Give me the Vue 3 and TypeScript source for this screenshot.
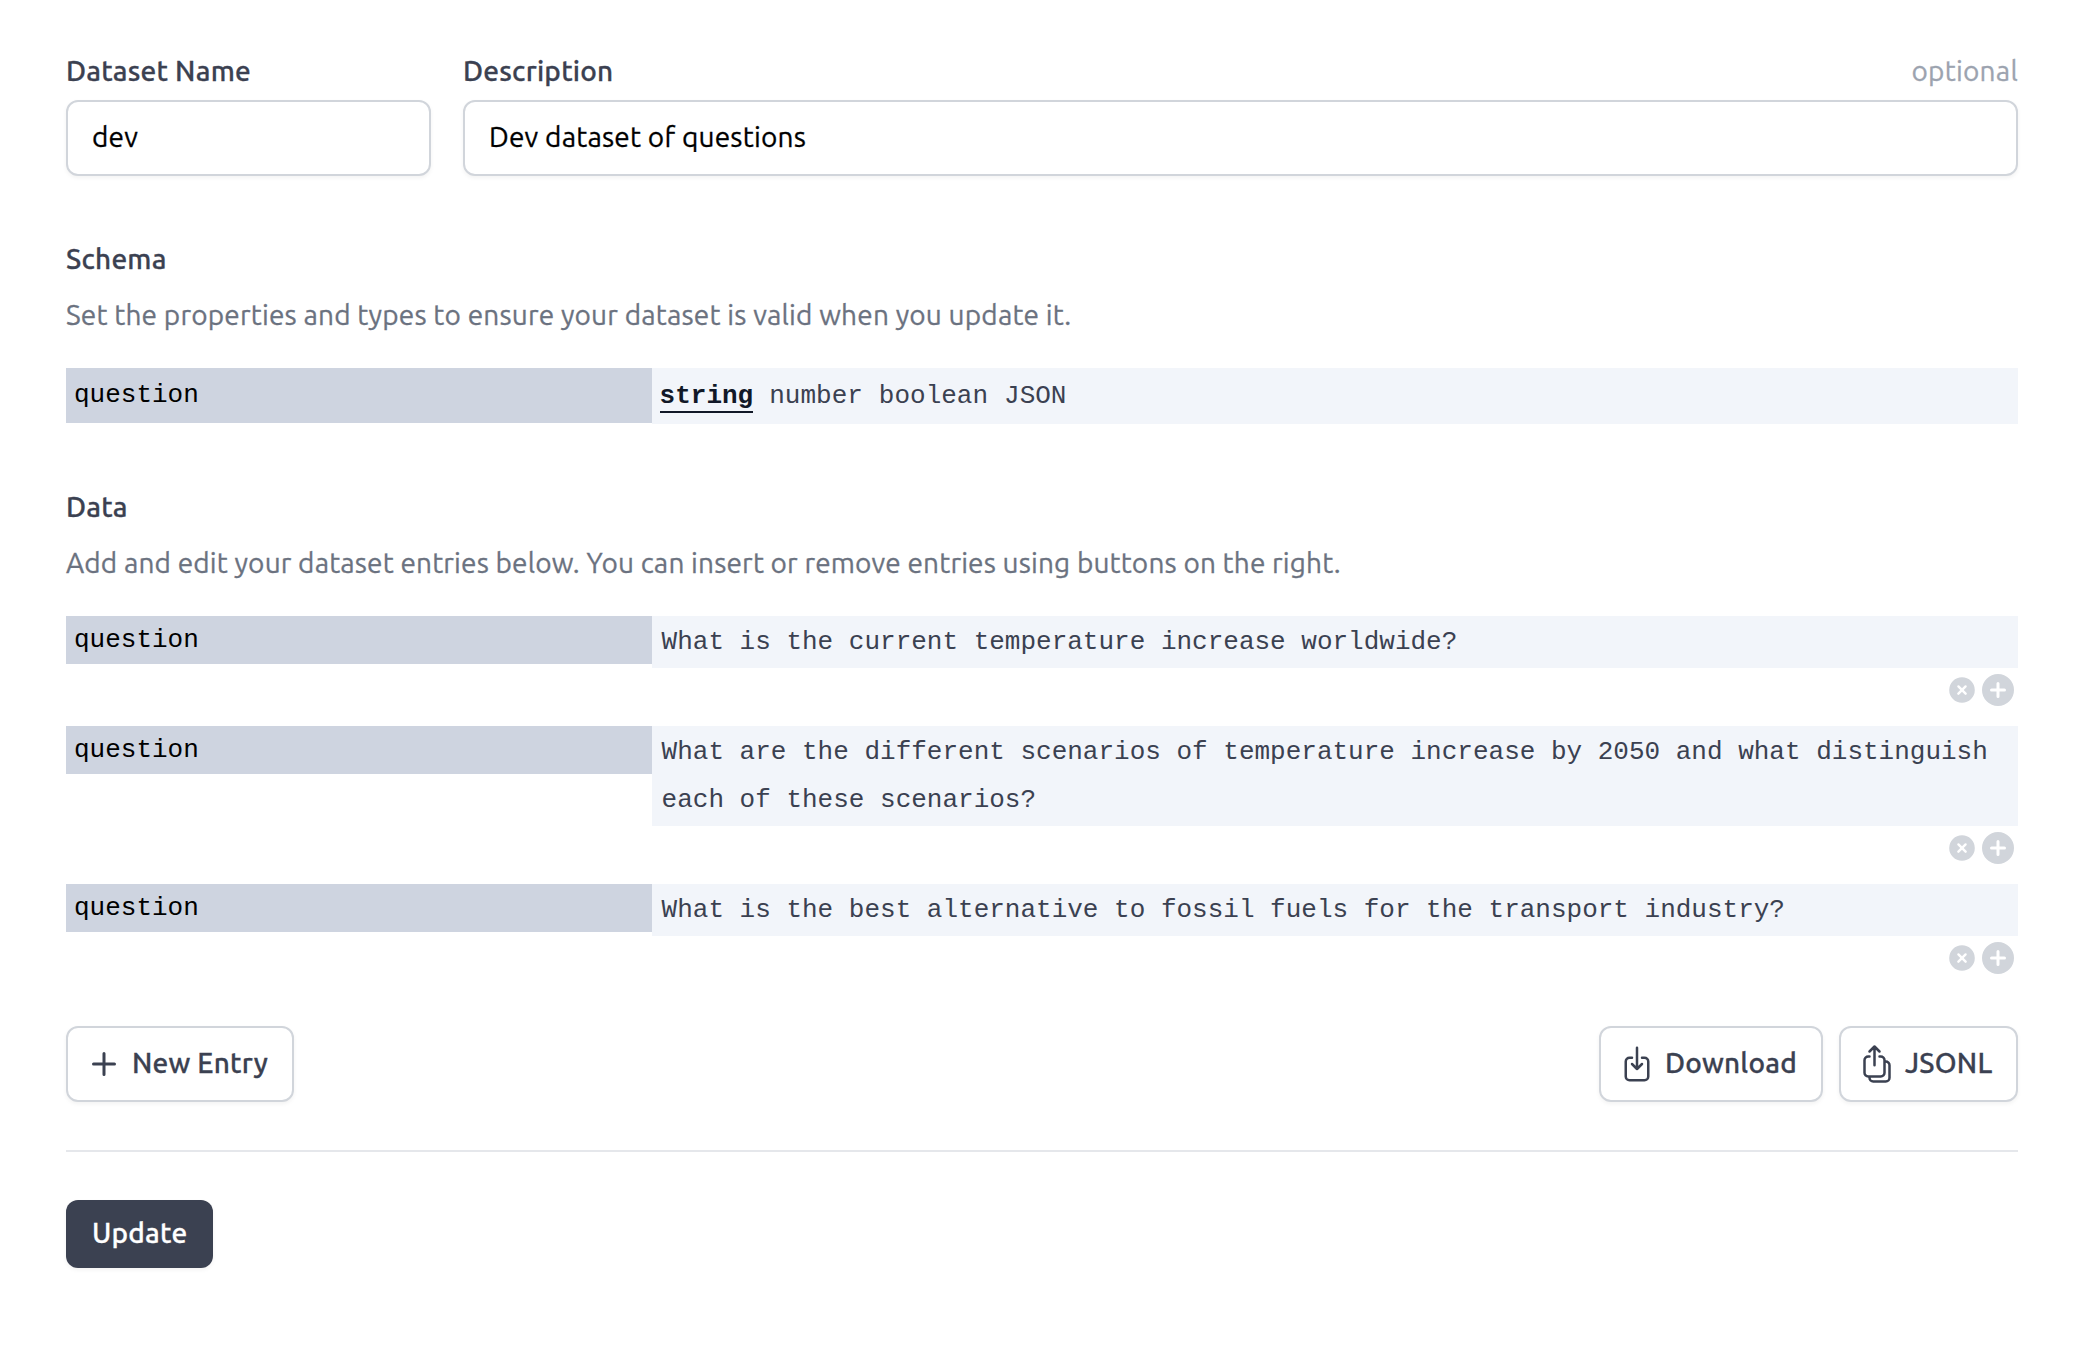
<script setup lang="ts">
import { ref } from 'vue'

interface Entry {
  id: number
  question: string
}

const name = ref('dev')
const description = ref('Dev dataset of questions')

const types = ['string', 'number', 'boolean', 'JSON']
const selectedType = ref('string')

const entries = ref<Entry[]>([
  { id: 1, question: 'What is the current temperature increase worldwide?' },
  {
    id: 2,
    question:
      'What are the different scenarios of temperature increase by 2050 and what distinguish each of these scenarios?',
  },
  { id: 3, question: 'What is the best alternative to fossil fuels for the transport industry?' },
])

let nextId = 4

function insertAfter(index: number) {
  entries.value.splice(index + 1, 0, { id: nextId++, question: '' })
}

function remove(index: number) {
  entries.value.splice(index, 1)
}
</script>

<template>
  <main class="page">
    <div class="fields">
      <div class="field field-name">
        <div class="label-row">
          <label class="label" for="name">Dataset Name</label>
        </div>
        <input id="name" v-model="name" class="input" type="text" />
      </div>
      <div class="field field-description">
        <div class="label-row">
          <label class="label" for="description">Description</label>
          <span class="optional">optional</span>
        </div>
        <input id="description" v-model="description" class="input" type="text" />
      </div>
    </div>

    <section class="section">
      <h3 class="label">Schema</h3>
      <p class="hint">Set the properties and types to ensure your dataset is valid when you update it.</p>
      <div class="row">
        <div class="key key-schema">question</div>
        <div class="value value-schema">
          <span
            v-for="type in types"
            :key="type"
            class="type"
            :class="{ selected: type === selectedType }"
            @click="selectedType = type"
          >{{ type }}</span>
        </div>
      </div>
    </section>

    <section class="section">
      <h3 class="label">Data</h3>
      <p class="hint hint-data">Add and edit your dataset entries below. You can insert or remove entries using buttons on the right.</p>
      <div class="entries">
        <div v-for="(entry, i) in entries" :key="entry.id" class="entry">
          <div class="row">
            <div class="key">question</div>
            <div class="value value-data">{{ entry.question }}</div>
          </div>
          <div class="entry-actions">
            <svg class="icon-remove" viewBox="0 0 20 20" fill="currentColor" @click="remove(i)">
              <path fill-rule="evenodd" clip-rule="evenodd" d="M10 18a8 8 0 100-16 8 8 0 000 16zM8.28 7.22a.75.75 0 00-1.06 1.06L8.94 10l-1.72 1.72a.75.75 0 101.06 1.06L10 11.06l1.72 1.72a.75.75 0 101.06-1.06L11.06 10l1.72-1.72a.75.75 0 00-1.06-1.06L10 8.94 8.28 7.22z" />
            </svg>
            <svg class="icon-insert" viewBox="0 0 20 20" fill="currentColor" @click="insertAfter(i)">
              <path fill-rule="evenodd" clip-rule="evenodd" d="M10 18a8 8 0 100-16 8 8 0 000 16zm.75-11.25a.75.75 0 00-1.5 0v2.5h-2.5a.75.75 0 000 1.5h2.5v2.5a.75.75 0 001.5 0v-2.5h2.5a.75.75 0 000-1.5h-2.5v-2.5z" />
            </svg>
          </div>
        </div>
      </div>
    </section>

    <div class="toolbar">
      <button class="button button-new" type="button" @click="insertAfter(entries.length - 1)">
        <svg class="icon" viewBox="0 0 20 20" fill="currentColor">
          <path d="M10.75 4.75a.75.75 0 00-1.5 0v4.5h-4.5a.75.75 0 000 1.5h4.5v4.5a.75.75 0 001.5 0v-4.5h4.5a.75.75 0 000-1.5h-4.5v-4.5z" />
        </svg>
        <span>New Entry</span>
      </button>
      <div class="toolbar-right">
        <button class="button button-download" type="button">
          <svg class="icon" viewBox="0 0 24 24" fill="none" stroke="currentColor" stroke-width="1.5" stroke-linecap="round" stroke-linejoin="round">
            <path d="M9 8.25H7.5a2.25 2.25 0 00-2.25 2.25v9a2.25 2.25 0 002.25 2.25h9a2.25 2.25 0 002.25-2.25v-9a2.25 2.25 0 00-2.25-2.25H15M9 12l3 3m0 0l3-3m-3 3V2.25" />
          </svg>
          <span>Download</span>
        </button>
        <button class="button button-jsonl" type="button">
          <svg class="icon" viewBox="0 0 24 24" fill="none" stroke="currentColor" stroke-width="1.5" stroke-linecap="round" stroke-linejoin="round">
            <path d="M7.5 7.5h-.75A2.25 2.25 0 004.5 9.75v7.5a2.25 2.25 0 002.25 2.25h7.5a2.25 2.25 0 002.25-2.25v-7.5a2.25 2.25 0 00-2.25-2.25h-.75m0-3l-3-3m0 0l-3 3m3-3v11.25m6-2.25h.75a2.25 2.25 0 012.25 2.25v7.5a2.25 2.25 0 01-2.25 2.25h-7.5a2.25 2.25 0 01-2.25-2.25v-.75" />
          </svg>
          <span>JSONL</span>
        </button>
      </div>
    </div>

    <div class="footer">
      <button class="button-update" type="button"><span>Update</span></button>
    </div>
  </main>
</template>

<style>
body {
  background: #fff;
}
</style>

<style scoped>
.page {
  box-sizing: border-box;
  width: 2090px;
  min-height: 1368px;
  padding: 51px 72px 0 66px;
  font: 400 28px/40px Ubuntu, "Noto Sans", sans-serif;
  letter-spacing: 0.23px;
  color: #3b4151;
}
.fields {
  display: flex;
  gap: 32px;
}
.field {
  display: flex;
  flex-direction: column;
  gap: 9px;
}
.field-name {
  width: 365px;
}
.field-description {
  flex: 1;
}
.label-row {
  display: flex;
  justify-content: space-between;
}
.label {
  margin: 0;
  font-size: 28px;
  font-weight: 500;
  line-height: 40px;
}
.label,
.optional,
.hint,
.input,
.button span,
.button-update span {
  -webkit-text-stroke: 0.3px currentColor;
}
.optional {
  color: #9ca3af;
}
.input {
  box-sizing: border-box;
  width: 100%;
  height: 76px;
  padding: 14px 24px 18px;
  border: 2px solid #d1d5db;
  border-radius: 12px;
  outline: none;
  background: #fff;
  box-shadow: 0 2px 4px rgba(0, 0, 0, 0.05);
  color: #000;
  font: inherit;
  letter-spacing: 0.2px;
}
.section {
  margin-top: 63px;
}
.hint {
  margin: 16px 0 33px;
  color: #6b7280;
  letter-spacing: 0.18px;
}
.hint-data {
  letter-spacing: 0.15px;
}
.row {
  display: flex;
  align-items: flex-start;
  font-family: "Liberation Mono", monospace;
  font-size: 26px;
  line-height: 48px;
  letter-spacing: 0;
}
.key {
  box-sizing: border-box;
  width: 30%;
  padding: 0 8px;
  background: #ced4e0;
  color: #000;
}
.key-schema {
  height: 55px;
  line-height: 55px;
}
.value {
  box-sizing: border-box;
  flex: 1;
  min-width: 0;
  background: #f2f5fa;
}
.value-schema {
  display: flex;
  gap: 16px;
  height: 56px;
  padding: 0 8px;
  line-height: 56px;
}
.type.selected {
  box-sizing: border-box;
  height: 45px;
  border-bottom: 2px solid #111827;
  color: #111827;
  font-weight: 700;
}
.value-data {
  padding: 2px 8px 2px 10px;
}
.entries {
  display: flex;
  flex-direction: column;
  gap: 16px;
}
.entry-actions {
  display: flex;
  align-items: center;
  justify-content: flex-end;
  margin-top: 2px;
  color: #d1d5db;
}
.icon-remove {
  display: block;
  width: 32px;
  height: 32px;
}
.icon-insert {
  display: block;
  width: 40px;
  height: 40px;
}
.toolbar {
  display: flex;
  justify-content: space-between;
  margin-top: 48px;
}
.toolbar-right {
  display: flex;
  gap: 16px;
}
.button {
  box-sizing: border-box;
  display: flex;
  align-items: center;
  gap: 8px;
  height: 76px;
  padding: 0 0 0 16px;
  border: 2px solid #d1d5db;
  border-radius: 12px;
  background: #fff;
  box-shadow: 0 2px 4px rgba(0, 0, 0, 0.05);
  color: #3b4151;
  font: inherit;
  font-weight: 500;
  letter-spacing: 0.22px;
}
.button span,
.button-update span {
  padding-bottom: 2px;
  white-space: nowrap;
}
.icon {
  flex: none;
  width: 40px;
  height: 40px;
}
.button-new {
  width: 228px;
}
.button-download {
  width: 224px;
}
.button-jsonl {
  width: 179px;
}
.footer {
  margin-top: 48px;
  padding-top: 48px;
  border-top: 2px solid #e5e7eb;
}
.button-update {
  box-sizing: border-box;
  display: flex;
  align-items: center;
  width: 147px;
  height: 68px;
  padding: 0 26px;
  border: 0;
  border-radius: 12px;
  background: #3b4151;
  box-shadow: 0 2px 4px rgba(0, 0, 0, 0.05);
  color: #fff;
  font: inherit;
  font-weight: 500;
  letter-spacing: 0.2px;
}
</style>
